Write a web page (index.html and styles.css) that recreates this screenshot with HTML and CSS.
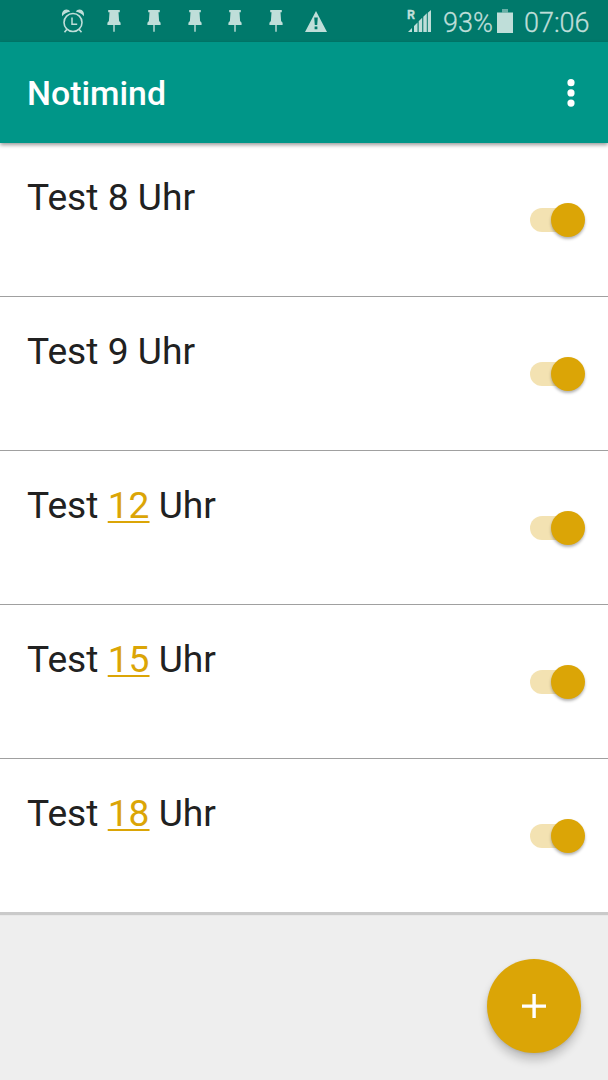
FILE: index.html
```
<!DOCTYPE html>
<html lang="de">
<head>
<meta charset="utf-8">
<title>Notimind</title>
<link rel="stylesheet" href="styles.css">
</head>
<body>
<svg class="defs" width="0" height="0">
  <symbol id="pin" viewBox="0 0 14 22"><path d="M1.200 0h11.600v2.200h-1.300l.6 8.800 1.500 1.800V15H7.700v6.700H6.300V15H.4v-2.200L1.900 11l.6-8.800H1.200z"/></symbol>
</svg>
<div class="screen">
  <div class="status">
    <div class="notifications">
      <svg class="alarm" viewBox="0 0 24 24"><g fill="none" stroke="currentColor" stroke-width="1.6"><circle cx="12" cy="13.500" r="9"/><path d="M11 8.500v6.800h5.200" stroke-width="1.500"/><path d="M5.800 20.500L3.500 23.300M18.200 20.500l2.300 2.800"/></g><path d="M1.200 7.200C.2 3.500 2.500.6 5.200.5 7 .4 8.400 1.200 9.200 2.600 6 3.200 3 4.800 1.200 7.200zM22.800 7.200c1-3.700-1.300-6.600-4-6.700-1.800-.1-3.200.7-4 2.100 3.200.6 6.200 2.200 8 4.600z"/></svg>
      <svg class="pin"><use href="#pin"/></svg>
      <svg class="pin"><use href="#pin"/></svg>
      <svg class="pin"><use href="#pin"/></svg>
      <svg class="pin"><use href="#pin"/></svg>
      <svg class="pin"><use href="#pin"/></svg>
      <svg class="warning" viewBox="0 0 22 21"><path fill-rule="evenodd" d="M11 0L22 21H0zM9.200 6.500l.6 7.500h2.400l.6-7.500zM9.600 15.500V18.300h2.800v-2.800z"/></svg>
    </div>
    <div class="system">
      <div class="signal"><span class="roaming">R</span><svg class="bars" viewBox="0 0 23 22"><path d="M0 22l4-4v4zM6 22v-6L9.500 12.500v9.500zM10.700 22V11.300l3.500-3.500V22zM15.300 22V6.700l3.500-3.500V22zM19.800 22V2.700L23 0v22z"/></svg></div>
      <span class="level">93%</span>
      <svg class="battery" viewBox="0 0 16 24"><path d="M0 3.500h16V24H0z"/><path opacity=".55" d="M5 0h6v3.500H5z"/></svg>
      <span class="clock">07:06</span>
    </div>
  </div>
  <header class="toolbar">
    <h1 class="title">Notimind</h1>
    <svg class="more" viewBox="0 0 8 28"><circle cx="4" cy="3.700" r="3.600"/><circle cx="4" cy="13.900" r="3.600"/><circle cx="4" cy="24.100" r="3.600"/></svg>
  </header>
  <main class="list">
    <div class="row"><span class="label">Test 8 Uhr</span><span class="switch"><span class="thumb"></span></span></div>
    <div class="row"><span class="label">Test 9 Uhr</span><span class="switch"><span class="thumb"></span></span></div>
    <div class="row"><span class="label">Test <span class="link">12</span> Uhr</span><span class="switch"><span class="thumb"></span></span></div>
    <div class="row"><span class="label">Test <span class="link">15</span> Uhr</span><span class="switch"><span class="thumb"></span></span></div>
    <div class="row"><span class="label">Test <span class="link">18</span> Uhr</span><span class="switch"><span class="thumb"></span></span></div>
  </main>
  <button class="fab" aria-label="Neu"><svg class="plus" viewBox="0 0 24 24"><path d="M10.400 0h3.400v10.400H24v3.400H13.800V24h-3.400V13.800H0v-3.400h10.400z"/></svg></button>
</div>
</body>
</html>
```
FILE: styles.css
```
* { box-sizing: border-box; }
body { margin: 0; font-family: Roboto, "Liberation Sans", sans-serif; }
svg { display: block; fill: currentColor; flex: none; }
.defs { position: absolute; }
.screen { position: relative; width: 608px; height: 1080px; background: #eeeeee; overflow: hidden; }
.status {
  height: 42px;
  display: flex;
  justify-content: space-between;
  background: #00796b;
  color: #bfded9;
}
.notifications { display: flex; align-items: flex-start; padding: 10px 0 0 61px; }
.alarm { width: 24px; height: 24px; margin: -1px 21.500px 0 0; }
.pin { width: 14px; height: 22px; margin-right: 26.500px; }
.warning { width: 22px; height: 21px; margin-left: -4px; margin-top: 1px; }
.system {
  display: flex;
  align-items: flex-start;
  padding-right: 18.500px;
  font-size: 27px;
  font-weight: 300;
  line-height: 46px;
  -webkit-text-stroke: .3px currentColor;
}
.signal { position: relative; width: 23px; height: 22px; margin: 10px 12px 0 0; }
.roaming { position: absolute; left: -1px; top: 0; font-size: 12.500px; font-weight: 700; line-height: 10px; }
.bars { width: 23px; height: 22px; }
.level { width: 49px; margin-right: 5px; }
.battery { width: 16px; height: 24px; margin: 9px 11px 0 0; }
.toolbar {
  position: relative;
  height: 101px;
  display: flex;
  align-items: center;
  justify-content: space-between;
  padding: 0 33px 0 27px;
  background: #009688;
  color: #fff;
  box-shadow: 0 2px 4px rgba(0, 0, 0, .4);
}
.title { margin: 2px 0 0; font-size: 33.800px; font-weight: 500; line-height: 40px; }
.more { width: 8px; height: 28px; margin-top: 1px; }
.list { background: #fff; box-shadow: 0 3px 1px rgba(0, 0, 0, .15); }
.row {
  height: 154px;
  display: flex;
  justify-content: space-between;
  padding: 32px 23px 0 27px;
  border-bottom: 1px solid #a0a0a0;
}
.row:last-child { height: 153px; border-bottom: 0; }
.label { font-size: 37.200px; line-height: 44px; color: #212121; white-space: pre; }
.link {
  color: #dba506;
  text-decoration: underline;
  text-decoration-thickness: 2px;
  text-underline-offset: 3px;
  text-decoration-skip-ink: none;
}
.switch {
  display: flex;
  align-items: center;
  justify-content: flex-end;
  width: 55px;
  height: 24px;
  margin-top: 32.500px;
  border-radius: 12px;
  background: linear-gradient(90deg, #f3e2b2 38px, transparent 38px);
}
.thumb {
  flex: none;
  width: 34px;
  height: 34px;
  border-radius: 50%;
  background: #dba506;
  box-shadow: 0 2px 3px rgba(0, 0, 0, .3);
}
.fab {
  position: absolute;
  right: 27px;
  bottom: 27px;
  width: 94.500px;
  height: 94.500px;
  display: flex;
  align-items: center;
  justify-content: center;
  padding: 0;
  border: 0;
  border-radius: 50%;
  background: #dba506;
  color: #fff;
  box-shadow: 0 7px 10px rgba(0, 0, 0, .2), 0 1px 3px rgba(0, 0, 0, .12);
}
.plus { width: 24px; height: 24px; }
```
